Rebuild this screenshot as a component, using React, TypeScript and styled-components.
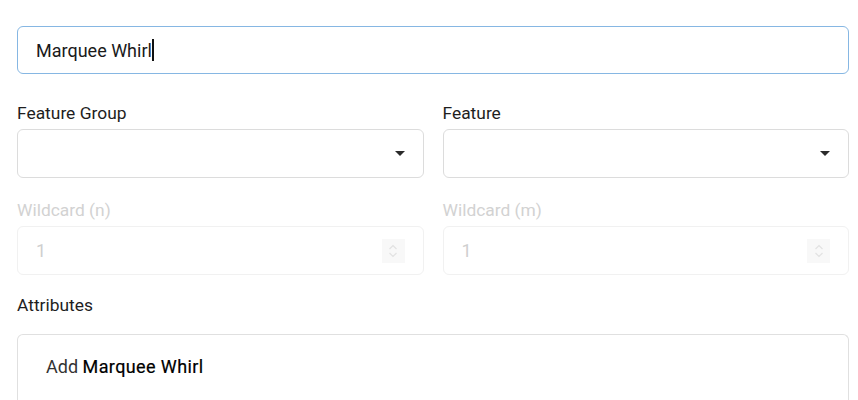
import React from 'react';
import styled, {createGlobalStyle} from "styled-components";

const GlobalStyle = createGlobalStyle`
body {
margin: 0;
background: #fff;
font-family: Roboto, "Liberation Sans", sans-serif;
color: #222;
}`;

type DisabledProps = {
    disabled? : boolean;
}

type GapProps = {
    top? : number;
}

const Page = styled.div`
width: 832px;
padding: 26px 0 0 17px;`;

const NameBox = styled.div`
height: 48px;
box-sizing: border-box;
border: 1px solid #86b7e3;
border-radius: 6px;
display: flex;
align-items: center;
padding: 0 18px;
font-size: 18px;
color: #1a1a1a;`;

const Caret = styled.span`
display: inline-block;
width: 2px;
height: 22px;
background: #111;`;

const Row = styled.div<GapProps>`
display: grid;
grid-template-columns: 1fr 1fr;
gap: 19px;
margin-top: ${(props) => props.top ?? 20}px;`;

const Field = styled.div`
display: flex;
flex-direction: column;`;

const Label = styled.div<DisabledProps>`
font-size: 17.4px;
line-height: 24px;
margin-bottom: 4px;
color: ${(props) => props.disabled ? "#d2d2d2" : "#1e1e1e"};`;

const Box = styled.div<DisabledProps>`
height: 49px;
box-sizing: border-box;
border: 1px solid ${(props) => props.disabled ? "#f1f1f1" : "#dcdcdc"};
border-radius: 6px;
display: flex;
align-items: center;
justify-content: space-between;
padding: 0 18px;
font-size: 18px;
color: ${(props) => props.disabled ? "#cfcfcf" : "#222"};`;

const Arrow = styled.span`
width: 0;
height: 0;
border-left: 5px solid transparent;
border-right: 5px solid transparent;
border-top: 5px solid #2b2b2b;`;

const Stepper = styled.div`
width: 23px;
height: 24px;
background: #f8f8f8;
display: flex;
align-items: center;
justify-content: center;`;

const Section = styled.div`
margin-top: 18px;`;

const Attributes = styled.div`
margin-top: 17px;
height: 80px;
box-sizing: border-box;
border: 1px solid #e0e0e0;
border-bottom: none;
border-radius: 6px 6px 0 0;
padding: 20px 28px;
font-size: 18px;
line-height: 24px;
color: #333;`;

const Strong = styled.span`
color: #000;
letter-spacing: 0.4px;
-webkit-text-stroke: 0.2px #000;`;

const Chevrons = () => (
    <svg width="12" height="16" viewBox="0 0 12 16" fill="none" stroke="#e2e2e2" strokeWidth="1.2">
        <path d="M2.5 6 L6 2.5 L9.5 6"/>
        <path d="M2.5 10 L6 13.5 L9.5 10"/>
    </svg>
);

const App = () => {
    return (
        <>
            <GlobalStyle/>
            <Page>
                <NameBox>Marquee Whirl<Caret/></NameBox>
                <Row top={27}>
                    <Field>
                        <Label>Feature Group</Label>
                        <Box><span/><Arrow/></Box>
                    </Field>
                    <Field>
                        <Label>Feature</Label>
                        <Box><span/><Arrow/></Box>
                    </Field>
                </Row>
                <Row top={20}>
                    <Field>
                        <Label disabled>Wildcard (n)</Label>
                        <Box disabled>1<Stepper><Chevrons/></Stepper></Box>
                    </Field>
                    <Field>
                        <Label disabled>Wildcard (m)</Label>
                        <Box disabled>1<Stepper><Chevrons/></Stepper></Box>
                    </Field>
                </Row>
                <Section>
                    <Label>Attributes</Label>
                </Section>
                <Attributes>Add <Strong>Marquee Whirl</Strong></Attributes>
            </Page>
        </>
    );
};

export default App;
